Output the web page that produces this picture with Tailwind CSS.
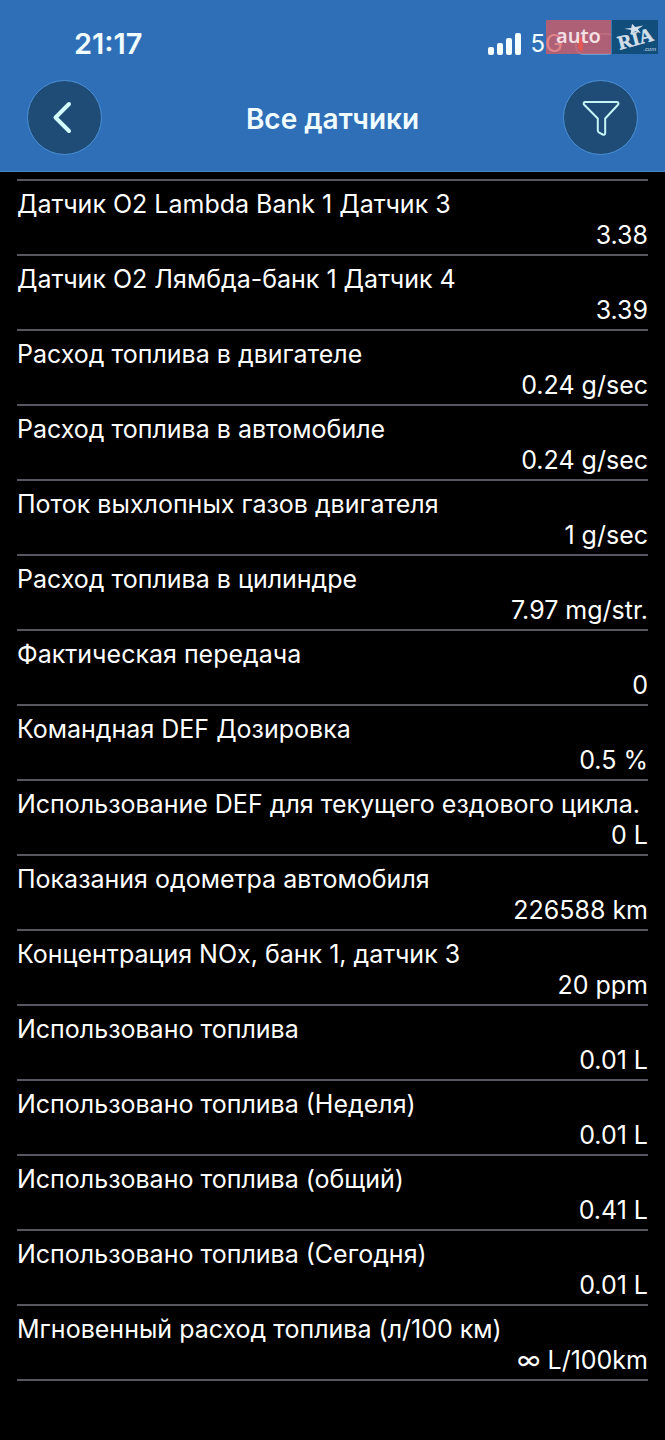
<!DOCTYPE html>
<html lang="ru">

<head>
    <meta charset="UTF-8">
    <meta name="viewport" content="width=device-width, initial-scale=1.0">
    <title>Все датчики</title>
    <script src="https://cdn.jsdelivr.net/npm/@tailwindcss/browser@4"></script>
</head>

<body class="min-h-screen bg-black text-white font-['Inter','Liberation_Sans',sans-serif]">
    <header class="bg-[#2f6fb7] border-b border-[#4a86c4]">
        <!-- Status bar -->
        <div class="flex items-center justify-between h-20 pl-[74px] pr-[46px] pt-2">
            <span class="text-[29px] leading-8 font-semibold text-[#f0fcff]">21:17</span>
            <div class="flex items-center">
                <svg class="w-9 h-6 mr-2" viewBox="0 0 36 24" fill="#f4fdff" aria-hidden="true">
                    <rect x="1" y="15" width="6" height="8" rx="2" />
                    <rect x="10" y="11" width="6" height="12" rx="2" />
                    <rect x="19" y="6" width="6" height="17" rx="2" />
                    <rect x="28" y="1" width="6" height="22" rx="2" />
                </svg>
                <span class="text-2xl leading-8 text-[#f0fcff] mr-3">5G</span>
                <svg class="w-11 h-6" viewBox="0 0 44 24" fill="none" aria-hidden="true">
                    <rect x="1" y="2" width="39" height="20" rx="7" stroke="#79abd9" stroke-width="1.5" />
                    <path d="M8 5v14H7a4 4 0 0 1-4-4V9a4 4 0 0 1 4-4z" fill="#ff4b35" />
                    <path d="M42 9c3 1 3 5 0 6z" fill="#79abd9" />
                </svg>
            </div>
        </div>

        <!-- Site badge -->
        <div class="absolute top-5 right-[7px] flex h-[34px]">
            <div class="w-[65px] bg-[#d95b60]/75 text-[#f3dfe2] text-xl leading-8 font-semibold text-center font-['Noto_Sans',sans-serif]">auto</div>
            <div class="w-[47px] bg-[#104c78]/95 border-l border-[#3a78ad]">
                <svg class="w-full h-full" viewBox="0 0 47 34" fill="#d2dfe9" role="img" aria-label="RIA.com">
                    <path d="M20.500 3.500l3.200 3.300 8.300-1.600-5.500 4 3 4-5.700-2-5 3.300.8-4.700-7-1.300 7-.8z" />
                    <text x="8" y="30" font-family="Liberation Serif, serif" font-size="20" font-weight="bold" stroke="#d2dfe9" stroke-width="0.5" transform="rotate(-15 8 30)">RIA</text>
                    <text x="32" y="31" font-family="Liberation Sans, sans-serif" font-size="6" font-style="italic">.com</text>
                </svg>
            </div>
        </div>

        <!-- Title bar -->
        <div class="flex items-center justify-between px-[27px] pb-4">
            <button type="button" aria-label="Назад"
                class="size-[75px] rounded-full bg-[#1f4b77] border border-[#4b91d6] flex items-center justify-center">
                <svg class="size-10 mr-1" viewBox="0 0 40 40" fill="none" stroke="#d2fbff" stroke-width="4"
                    stroke-linecap="round" stroke-linejoin="round">
                    <path d="M26 6L12.500 19.500L26 33" />
                </svg>
            </button>
            <h1 class="text-[28px] leading-9 pt-0.5 font-semibold text-[#f0fcff]">Все датчики</h1>
            <button type="button" aria-label="Фильтр"
                class="size-[75px] rounded-full bg-[#1f4b77] border border-[#4b91d6] flex items-center justify-center">
                <svg class="size-10" viewBox="0 0 40 40" fill="none" stroke="#c4f5f5" stroke-width="2"
                    stroke-linejoin="round">
                    <path d="M4.500 4h31c2 0 2.500 1.500 1.500 2.700L24.200 20.500V35c0 1.500-1.200 2-2.500 1.500l-3.500-1.800c-1-.5-1.400-1.200-1.400-2.200V20.500L3.200 6.700C2 5.500 2.800 4 4.500 4z" />
                </svg>
            </button>
        </div>
    </header>

    <main class="px-[17px] pt-[7px]">
        <!-- Sensor list -->
        <dl class="border-t-2 border-[#57575f] divide-y-2 divide-[#57575f] border-b-2 text-[25px] leading-[31px]">
            <div class="pt-2 pb-[3px]">
                <dt>Датчик O2 Lambda Bank 1 Датчик 3</dt>
                <dd class="text-right">3.38</dd>
            </div>
            <div class="pt-2 pb-[3px]">
                <dt>Датчик O2 Лямбда-банк 1 Датчик 4</dt>
                <dd class="text-right">3.39</dd>
            </div>
            <div class="pt-2 pb-[3px]">
                <dt>Расход топлива в двигателе</dt>
                <dd class="text-right">0.24 g/sec</dd>
            </div>
            <div class="pt-2 pb-[3px]">
                <dt>Расход топлива в автомобиле</dt>
                <dd class="text-right">0.24 g/sec</dd>
            </div>
            <div class="pt-2 pb-[3px]">
                <dt>Поток выхлопных газов двигателя</dt>
                <dd class="text-right">1 g/sec</dd>
            </div>
            <div class="pt-2 pb-[3px]">
                <dt>Расход топлива в цилиндре</dt>
                <dd class="text-right">7.97 mg/str.</dd>
            </div>
            <div class="pt-2 pb-[3px]">
                <dt>Фактическая передача</dt>
                <dd class="text-right">0</dd>
            </div>
            <div class="pt-2 pb-[3px]">
                <dt>Командная DEF Дозировка</dt>
                <dd class="text-right">0.5 %</dd>
            </div>
            <div class="pt-2 pb-[3px]">
                <dt>Использование DEF для текущего ездового цикла.</dt>
                <dd class="text-right">0 L</dd>
            </div>
            <div class="pt-2 pb-[3px]">
                <dt>Показания одометра автомобиля</dt>
                <dd class="text-right">226588 km</dd>
            </div>
            <div class="pt-2 pb-[3px]">
                <dt>Концентрация NOx, банк 1, датчик 3</dt>
                <dd class="text-right">20 ppm</dd>
            </div>
            <div class="pt-2 pb-[3px]">
                <dt>Использовано топлива</dt>
                <dd class="text-right">0.01 L</dd>
            </div>
            <div class="pt-2 pb-[3px]">
                <dt>Использовано топлива (Неделя)</dt>
                <dd class="text-right">0.01 L</dd>
            </div>
            <div class="pt-2 pb-[3px]">
                <dt>Использовано топлива (общий)</dt>
                <dd class="text-right">0.41 L</dd>
            </div>
            <div class="pt-2 pb-[3px]">
                <dt>Использовано топлива (Сегодня)</dt>
                <dd class="text-right">0.01 L</dd>
            </div>
            <div class="pt-2 pb-[3px]">
                <dt>Мгновенный расход топлива (л/100 км)</dt>
                <dd class="text-right">∞ L/100km</dd>
            </div>
        </dl>
    </main>
</body>

</html>
